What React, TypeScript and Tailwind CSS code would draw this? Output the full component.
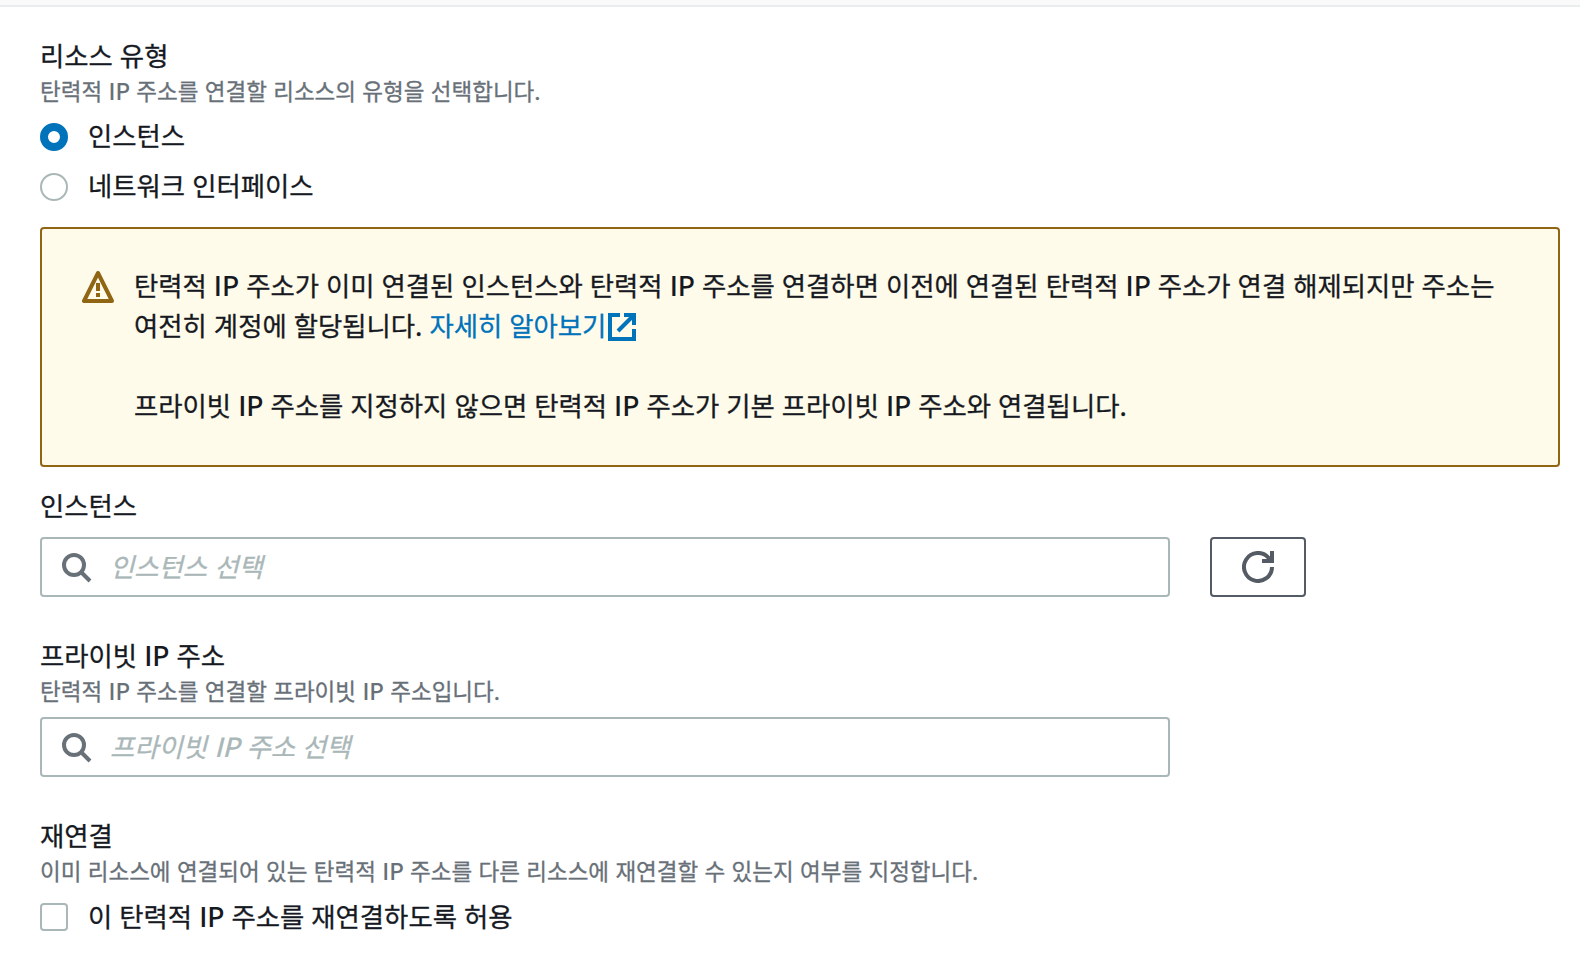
import type { ReactNode } from 'react';

// Latin runs are set slightly heavier than the Hangul around them
function Label({ children }: { children: string }) {
  return (
    <>
      {children.split(/(IP)/).map((part, i) =>
        part === 'IP' ? <span key={i} className="font-medium [-webkit-text-stroke:0px]">{part}</span> : part
      )}
    </>
  );
}

function Title({ children }: { children: string }) {
  return <h3 className="h-10 text-[26.4px] leading-[38px] text-[#16191f]"><Label>{children}</Label></h3>;
}

function Description({ children }: { children: string }) {
  return (
    <p className="h-8 text-[22.5px] leading-[29px] [word-spacing:1.3px] text-[#687078]"><Label>{children}</Label></p>
  );
}

function Radio({ checked, children }: { checked?: boolean; children: string }) {
  return (
    <label className="flex h-10 items-center gap-5">
      <span className={`mt-0.5 size-7 shrink-0 rounded-full ${checked ? 'border-[8px] border-[#0073bb]' : 'border-2 border-[#aab7b8]'}`} />
      <span className="-mt-0.5 text-[26.4px] leading-10"><Label>{children}</Label></span>
    </label>
  );
}

function SearchIcon() {
  return (
    <svg viewBox="0 0 32 32" className="mt-0.5 size-8 shrink-0" fill="none" stroke="#687078" strokeWidth="4">
      <circle cx="13" cy="13" r="10" />
      <path d="M20 20l9 9" />
    </svg>
  );
}

function SearchField({ placeholder }: { placeholder: string }) {
  return (
    <div className="flex h-[60px] w-[1130px] shrink-0 items-center gap-[17px] rounded-[4px] border-2 border-[#aab7b8] bg-white pl-[19px]">
      <SearchIcon />
      <span className="-mt-0.5 text-[26.4px] leading-10 text-[#aab7b8] italic"><Label>{placeholder}</Label></span>
    </div>
  );
}

function Warning({ children }: { children: ReactNode }) {
  return (
    <div className="mt-[21px] flex h-60 rounded-[4px] border-2 border-[#906514] bg-[#fffbea] pt-9 pl-10">
      <svg viewBox="0 0 32 32" className="mt-1.5 size-8 shrink-0" fill="none" stroke="#906514" strokeWidth="4" strokeLinejoin="round">
        <path d="M16 2L2 30h28z" />
        <path d="M16 12v8M16 22v4" />
      </svg>
      <div className="ml-5 text-[26.4px] leading-10 whitespace-nowrap">{children}</div>
    </div>
  );
}

export default function App() {
  return (
    <div className="h-[958px] overflow-hidden bg-white font-['Noto_Sans_CJK_KR',sans-serif] text-[#16191f] [word-spacing:1.1px] [-webkit-text-stroke:0.3px]">
      <div className="h-[7px] border-b-2 border-[#eaeded] bg-[#fafafa]" />
      <main className="pr-5 pl-10">
        <section className="pt-[29px]">
          <Title>리소스 유형</Title>
          <Description>탄력적 IP 주소를 연결할 리소스의 유형을 선택합니다.</Description>
          <div className="mt-2 flex flex-col gap-2.5">
            <Radio checked>인스턴스</Radio>
            <Radio>네트워크 인터페이스</Radio>
          </div>
        </section>

        <Warning>
          <p><Label>탄력적 IP 주소가 이미 연결된 인스턴스와 탄력적 IP 주소를 연결하면 이전에 연결된 탄력적 IP 주소가 연결 해제되지만 주소는</Label></p>
          <p className="flex">
            여전히 계정에 할당됩니다.
            <a className="ml-[7px] flex text-[#0073bb]">
              자세히 알아보기
              <svg viewBox="0 0 28 28" className="mt-2 ml-0.5 size-7" fill="none" stroke="#0073bb" strokeWidth="4">
                <path d="M12 2H2v24h24V16M16 2h10v10M26 2L10 18" />
              </svg>
            </a>
          </p>
          <p className="mt-10"><Label>프라이빗 IP 주소를 지정하지 않으면 탄력적 IP 주소가 기본 프라이빗 IP 주소와 연결됩니다.</Label></p>
        </Warning>

        <section className="pt-[19px]">
          <Title>인스턴스</Title>
          <div className="mt-[11px] flex gap-10">
            <SearchField placeholder="인스턴스 선택" />
            <button className="flex h-[60px] w-24 items-center justify-center rounded-[4px] border-2 border-[#545b64]">
              <svg viewBox="0 0 32 32" className="size-8" fill="none" stroke="#545b64" strokeWidth="4">
                <path d="M30 16A14 14 0 1 1 26.5 6.7L29 10" />
                <path d="M30 0v10H20" />
              </svg>
            </button>
          </div>
        </section>

        <section className="pt-[39px]">
          <Title>프라이빗 IP 주소</Title>
          <Description>탄력적 IP 주소를 연결할 프라이빗 IP 주소입니다.</Description>
          <div className="mt-[9px]">
            <SearchField placeholder="프라이빗 IP 주소 선택" />
          </div>
        </section>

        <section className="pt-[39px]">
          <Title>재연결</Title>
          <Description>이미 리소스에 연결되어 있는 탄력적 IP 주소를 다른 리소스에 재연결할 수 있는지 여부를 지정합니다.</Description>
          <label className="mt-2 flex h-10 items-center gap-5">
            <span className="mt-0.5 size-7 shrink-0 rounded-[4px] border-2 border-[#aab7b8]" />
            <span className="text-[26.4px] leading-10"><Label>이 탄력적 IP 주소를 재연결하도록 허용</Label></span>
          </label>
        </section>
      </main>
    </div>
  );
}
